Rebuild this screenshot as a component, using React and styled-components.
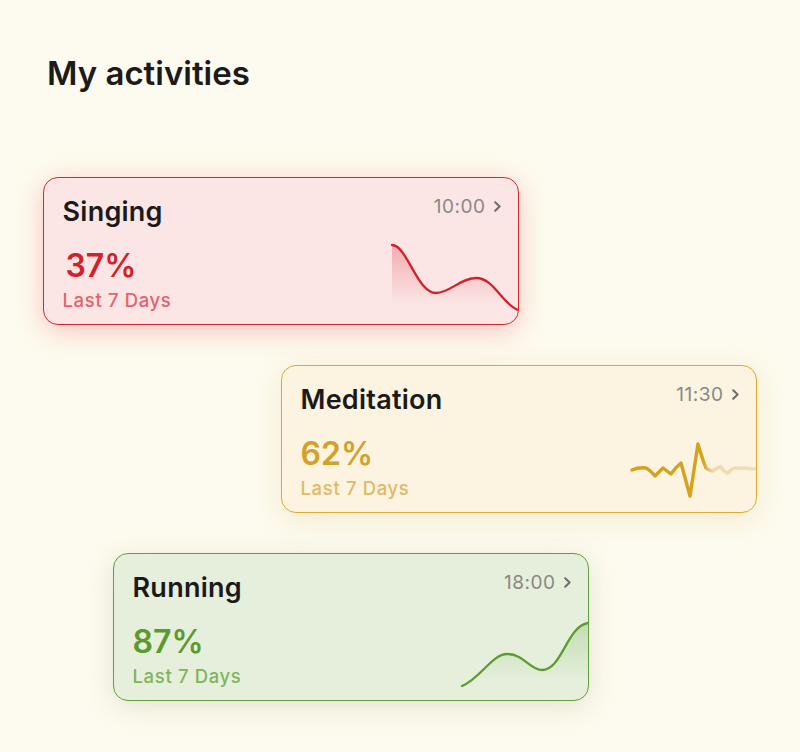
import React from 'react'
import styled, { createGlobalStyle } from 'styled-components'

const GlobalStyle = createGlobalStyle`
  html, body {
    margin: 0;
    padding: 0;
    background: #fdfbef;
  }
  body {
    font-family: Inter, "Noto Sans", sans-serif;
    color: #1a1a1a;
  }
  * {
    box-sizing: border-box;
  }
`

const Page = styled.main`
  display: flex;
  flex-direction: column;
  min-height: 752px;
  padding: 54px 0 0 0;
`

const Heading = styled.h1`
  font-size: 33px;
  font-weight: 600;
  line-height: 38px;
  margin: 0 0 85px 47px;
  color: #1c1a1a;
`

const List = styled.div`
  display: flex;
  flex-direction: column;
  gap: 40px;
`

const Card = styled.section`
  background-color: ${p => p.theme.bg};
  border: 1.5px solid ${p => p.theme.border};
  border-radius: 15px;
  box-shadow: 0 6px 28px ${p => p.theme.glow};
  display: grid;
  grid-template-columns: 1fr 126px;
  height: 148px;
  margin-left: ${p => p.offset}px;
  overflow: hidden;
  width: 476px;
`

const Info = styled.div`
  display: flex;
  flex-direction: column;
  padding: 17.5px 0 0 18.5px;
`

const Title = styled.h2`
  color: #1b1a1a;
  font-size: 27px;
  font-weight: 600;
  letter-spacing: 0.25px;
  line-height: 32px;
  margin: 0 0 19px 0;
`

const Percent = styled.div`
  color: ${p => p.theme.accent};
  font-size: 32px;
  font-weight: 600;
  line-height: 38px;
  padding-left: ${p => p.nudge || 0}px;
`

const Period = styled.div`
  color: ${p => p.theme.soft};
  font-size: 18.5px;
  font-weight: 500;
  letter-spacing: 0.65px;
  line-height: 22px;
  margin-top: 4px;
`

const Side = styled.div`
  display: flex;
  flex-direction: column;
  align-items: flex-end;
`

const Time = styled.div`
  align-items: center;
  color: #8a8886;
  display: flex;
  font-size: 19px;
  gap: 8px;
  letter-spacing: 0.5px;
  line-height: 22px;
  padding: 17.5px 17.5px 0 0;
  white-space: nowrap;

  svg {
    display: block;
  }
`

const Chart = styled.svg`
  display: block;
  margin-top: auto;
  margin-bottom: 10.5px;
  overflow: visible;
`

const themes = {
  red: {
    bg: '#fce5e5',
    border: '#d9272e',
    glow: 'rgba(240, 95, 95, 0.34)',
    accent: '#d42127',
    soft: '#e2636b',
  },
  gold: {
    bg: '#fcf3e0',
    border: '#dcaa2c',
    glow: 'rgba(222, 192, 122, 0.3)',
    accent: '#d3a12a',
    soft: '#dfba66',
  },
  green: {
    bg: '#e5efdc',
    border: '#61a03a',
    glow: 'rgba(170, 180, 150, 0.32)',
    accent: '#5a9a2e',
    soft: '#7fb65b',
  },
}

const Chevron = () =>
  <svg width="7" height="11" viewBox="0 0 7 11">
    <polyline points="1.2,1.2 5.6,5.5 1.2,9.8" fill="none" stroke="#6f6d6b" strokeWidth="2" strokeLinecap="round" strokeLinejoin="round" />
  </svg>

const WaveChart = ({ id, line, fill, color, shade }) =>
  <Chart width="126" height="80" viewBox="0 0 126 80">
    <defs>
      <linearGradient id={id} x1="0" y1="0" x2="0" y2="1">
        <stop offset="0" stopColor={shade} stopOpacity="0.38" />
        <stop offset="0.85" stopColor={shade} stopOpacity="0" />
      </linearGradient>
    </defs>
    <path d={fill} fill={`url(#${id})`} />
    <path d={line} fill="none" stroke={color} strokeWidth="2.3" strokeLinecap="round" />
  </Chart>

const PulseChart = ({ color }) =>
  <Chart width="126" height="80" viewBox="0 0 126 80">
    <defs>
      <linearGradient id="pulse" x1="0" y1="0" x2="126" y2="0" gradientUnits="userSpaceOnUse">
        <stop offset="0.58" stopColor={color} />
        <stop offset="0.66" stopColor="#ecdcaa" />
        <stop offset="1" stopColor="#eee0b4" />
      </linearGradient>
    </defs>
    <path
      d="M2,48 Q9,45 16,46 Q20,48 25,54 Q29,50 33,46 Q37,49 41,52 Q46,45 51,41 L60,74 L68,22 Q72,36 76,46 Q80,49 83,49 Q87,45 91,45 Q95,51 98,51 Q102,46 106,46 Q115,46 125,47"
      fill="none"
      stroke="url(#pulse)"
      strokeWidth="3.4"
      strokeLinecap="round"
      strokeLinejoin="round"
    />
  </Chart>

const singingLine = 'M0,11 C15,11 25,59 44,59 C58,59 68,44 84,44 C102,44 110,70 126,76'
const runningLine = 'M0,76 C18,69 30,44 45,44 C62,44 68,60 80,60 C100,60 105,16 126,13'

const activities = [
  {
    name: 'Singing',
    time: '10:00',
    value: '37%',
    theme: themes.red,
    offset: 43,
    nudge: 3,
    chart: <WaveChart id="sing" line={singingLine} fill={`${singingLine} L126,80 L0,80 Z`} color="#d42127" shade="#e0505a" />,
  },
  {
    name: 'Meditation',
    time: '11:30',
    value: '62%',
    theme: themes.gold,
    offset: 281,
    chart: <PulseChart color="#d5a21f" />,
  },
  {
    name: 'Running',
    time: '18:00',
    value: '87%',
    theme: themes.green,
    offset: 113,
    chart: <WaveChart id="run" line={runningLine} fill={`${runningLine} L126,80 L0,80 Z`} color="#5c9c30" shade="#8cc06a" />,
  },
]

const App = () =>
  <>
    <GlobalStyle />
    <Page>
      <Heading>My activities</Heading>
      <List>
        {
          activities.map(a =>
            <Card key={a.name} theme={a.theme} offset={a.offset}>
              <Info>
                <Title>{a.name}</Title>
                <Percent theme={a.theme} nudge={a.nudge}>{a.value}</Percent>
                <Period theme={a.theme}>Last 7 Days</Period>
              </Info>
              <Side>
                <Time>{a.time}<Chevron /></Time>
                {a.chart}
              </Side>
            </Card>
          )
        }
      </List>
    </Page>
  </>

export default App
